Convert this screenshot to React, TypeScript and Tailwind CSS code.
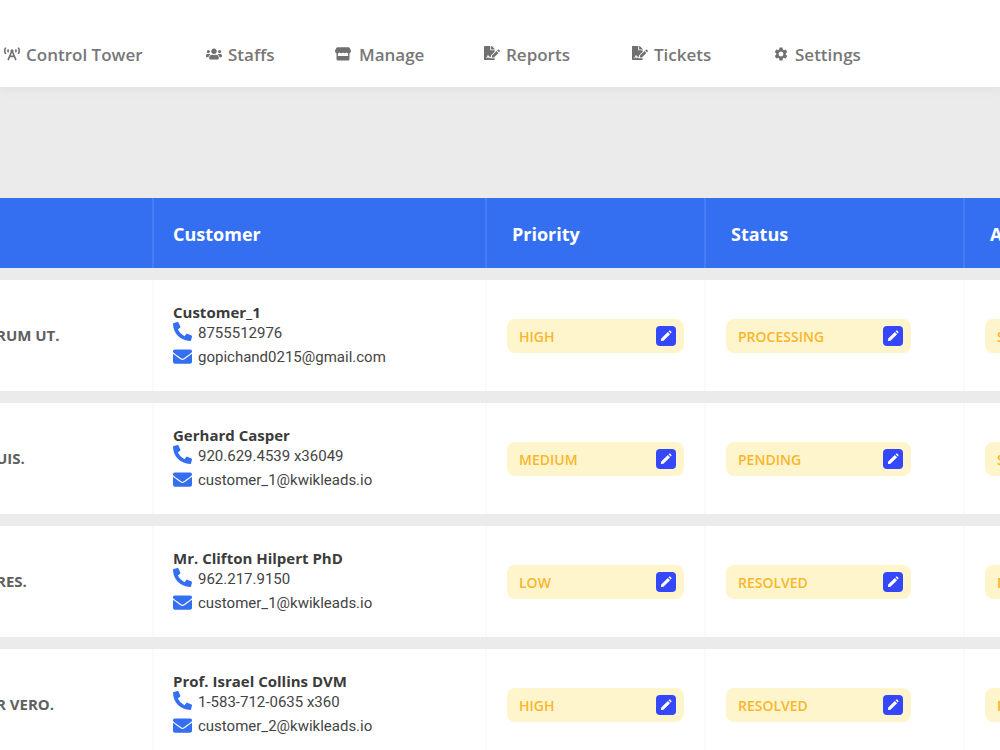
import type { ComponentType } from "react";
import {
  FaBroadcastTower,
  FaUsers,
  FaFileSignature,
  FaPhoneAlt,
  FaEnvelope,
} from "react-icons/fa";
import { MdSettings } from "react-icons/md";

type IconProps = { className?: string };

function StoreIcon({ className }: IconProps) {
  return (
    <svg viewBox="0 0 16 16" fill="currentColor" className={className} aria-hidden="true">
      <path d="M2.6 1.2h10.8c.6 0 1 .2 1.3.7l1 2.2c.6 1.4-.1 2.8-1.2 3.2v5.600c0 .9-.6 1.500-1.500 1.500H3c-.9 0-1.500-.6-1.500-1.500V7.300C.4 6.900-.3 5.500.3 4.100l1-2.200c.3-.5.7-.7 1.300-.7ZM2.900 7.400v2.600h10.200V7.400c-.7 0-1.300-.3-1.700-.8-.8 1-2.600 1-3.400 0-.8 1-2.600 1-3.400 0-.4.5-1 .8-1.700.8Z" />
    </svg>
  );
}

function PencilIcon({ className }: IconProps) {
  return (
    <svg viewBox="0 0 16 16" fill="currentColor" className={className} aria-hidden="true">
      <path d="M2.400 13.600c-.2-.2-.3-.4-.2-.7l.3-1.700c0-.2.100-.4.300-.6l7.300-7.300 2.600 2.600-7.300 7.300c-.2.200-.4.300-.6.300l-1.700.3c-.3.100-.500 0-.700-.2ZM10.900 2.500l.5-.5c.5-.5 1.100-.5 1.600 0l1 1c.5.500.5 1.100 0 1.600l-.5.500-2.600-2.600Z" />
    </svg>
  );
}

type NavItem = { label: string; icon: ComponentType<IconProps>; item: string; glyph: string };

const nav: NavItem[] = [
  { label: "Control Tower", icon: FaBroadcastTower, item: "w-[202px] gap-1.5", glyph: "mb-0.5" },
  { label: "Staffs", icon: FaUsers, item: "w-[129px] gap-1.5", glyph: "mb-0.5" },
  { label: "Manage", icon: StoreIcon, item: "w-[149px] gap-2", glyph: "mb-0.5" },
  { label: "Reports", icon: FaFileSignature, item: "w-[148px] gap-1.5", glyph: "mb-1" },
  { label: "Tickets", icon: FaFileSignature, item: "w-[141px] gap-1.5", glyph: "mb-1" },
  { label: "Settings", icon: MdSettings, item: "gap-1.5", glyph: "mb-0.5" },
];

type Ticket = {
  subject: string;
  customer: string;
  phone: string;
  email: string;
  priority: string;
  status: string;
  action: string;
};

const tickets: Ticket[] = [
  { subject: "RUM UT.", customer: "Customer_1", phone: "8755512976", email: "gopichand0215@gmail.com", priority: "HIGH", status: "PROCESSING", action: "S" },
  { subject: "UIS.", customer: "Gerhard Casper", phone: "920.629.4539 x36049", email: "customer_1@kwikleads.io", priority: "MEDIUM", status: "PENDING", action: "S" },
  { subject: "RES.", customer: "Mr. Clifton Hilpert PhD", phone: "962.217.9150", email: "customer_1@kwikleads.io", priority: "LOW", status: "RESOLVED", action: "P" },
  { subject: "R VERO.", customer: "Prof. Israel Collins DVM", phone: "1-583-712-0635 x360", email: "customer_2@kwikleads.io", priority: "HIGH", status: "RESOLVED", action: "P" },
];

function Badge({ text, kind, width }: { text: string; kind: string; width: string }) {
  return (
    <div className={`flex h-[34px] items-center justify-between rounded-lg bg-[#fff5cd] pr-2 pl-3 text-sm leading-5 font-semibold text-[#fbb52b] ${width}`}>
      <span className="pt-0.5">{text}</span>
      <button type="button" aria-label={`Edit ${kind}`} className="flex size-5 items-center justify-center rounded bg-[#3447fa] text-white">
        <PencilIcon className="size-3.5" />
      </button>
    </div>
  );
}

const head = "border-r-2 border-[#467cf6] pt-0.5 text-left text-lg font-bold";
const cell = "border-r-2 border-[#fafafb]";
const contact = "flex h-6 items-center gap-1.5 font-['Roboto',sans-serif] text-[15px]";

export default function App() {
  return (
    <div className="h-screen overflow-hidden bg-[#ebebeb] font-['Open_Sans','Noto_Sans',sans-serif]">
      <header className="relative h-[87px] bg-white shadow-[0_0_10px_4px_rgba(0,0,0,0.04)]">
        <nav className="flex pt-[43px] pl-1 text-[17px] leading-6 font-semibold text-[#777777]">
          {nav.map(({ label, icon: Icon, item, glyph }) => (
            <a key={label} href="#" className={`flex shrink-0 items-center whitespace-nowrap ${item}`}>
              <Icon className={`size-4 shrink-0 text-[#707070] ${glyph}`} />
              {label}
            </a>
          ))}
        </nav>
      </header>

      <main className="pt-[99px]">
        <table className="w-full table-fixed border-separate border-spacing-x-0 border-spacing-y-3">
          <colgroup>
            <col className="w-[15.4%]" />
            <col className="w-[33.3%]" />
            <col className="w-[21.9%]" />
            <col className="w-[25.9%]" />
            <col />
          </colgroup>
          <thead>
            <tr className="h-[70px] bg-[#356ff1] text-white">
              <th className={head}></th>
              <th className={`pl-[19px] ${head}`}>Customer</th>
              <th className={`pl-[25px] ${head}`}>Priority</th>
              <th className={`pl-[25px] ${head}`}>Status</th>
              <th className="overflow-hidden pt-0.5 pl-[25px] text-left text-lg font-bold">A</th>
            </tr>
          </thead>
          <tbody>
            {tickets.map((t) => (
              <tr key={t.customer} className="h-[111px] bg-white">
                <td className={`text-[15px] font-bold whitespace-nowrap text-[#606060] ${cell}`}>
                  <div className="-ml-1">{t.subject}</div>
                </td>
                <td className={`pl-[19px] text-[#444444] ${cell}`}>
                  <div className="text-[15px] leading-5 font-bold text-[#3b3b3b]">{t.customer}</div>
                  <div className={contact}>
                    <FaPhoneAlt className="mb-1 size-[19px] text-[#356ff1]" />
                    {t.phone}
                  </div>
                  <div className={contact}>
                    <FaEnvelope className="mb-0.5 size-[19px] text-[#356ff1]" />
                    {t.email}
                  </div>
                </td>
                <td className={`pl-5 ${cell}`}>
                  <Badge text={t.priority} kind="priority" width="w-[177px]" />
                </td>
                <td className={`pl-5 ${cell}`}>
                  <Badge text={t.status} kind="status" width="w-[185px]" />
                </td>
                <td className="overflow-hidden pl-5">
                  <Badge text={t.action} kind="action" width="w-[185px]" />
                </td>
              </tr>
            ))}
          </tbody>
        </table>
      </main>
    </div>
  );
}
